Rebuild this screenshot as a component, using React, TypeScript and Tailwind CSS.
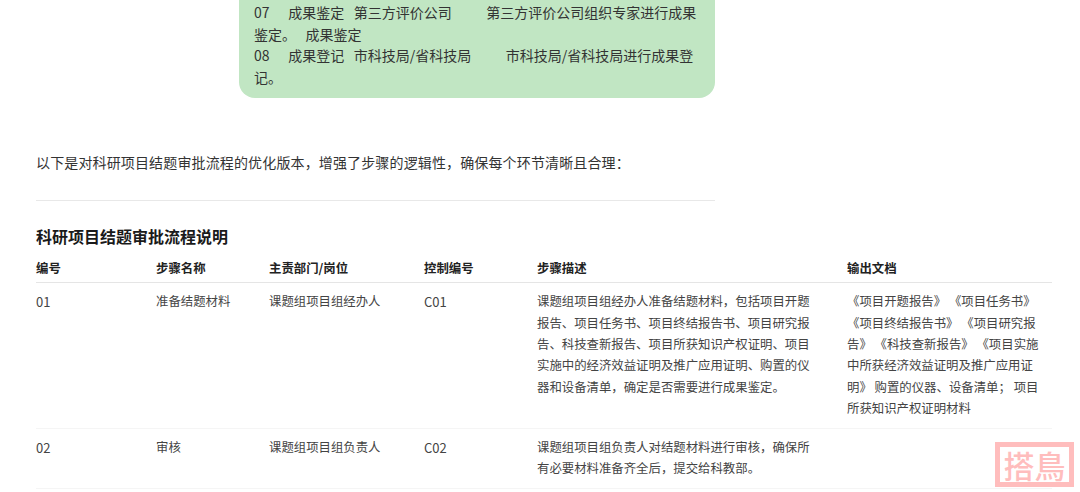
import React from 'react';

const rows = [
  {
    no: '01',
    name: '准备结题材料',
    dept: '课题组项目组经办人',
    code: 'C01',
    desc: '课题组项目组经办人准备结题材料，包括项目开题报告、项目任务书、项目终结报告书、项目研究报告、科技查新报告、项目所获知识产权证明、项目实施中的经济效益证明及推广应用证明、购置的仪器和设备清单，确定是否需要进行成果鉴定。',
    docs: ' 《项目开题报告》 《项目任务书》 《项目终结报告书》 《项目研究报告》 《科技查新报告》 《项目实施中所获经济效益证明及推广应用证明》 购置的仪器、设备清单； 项目所获知识产权证明材料',
  },
  {
    no: '02',
    name: '审核',
    dept: '课题组项目组负责人',
    code: 'C02',
    desc: '课题组项目组负责人对结题材料进行审核，确保所有必要材料准备齐全后，提交给科教部。',
    docs: '',
  },
];

const App: React.FC = () => {
  return (
    <div className="relative h-[492px] w-[1080px] overflow-hidden bg-white text-[#333] font-['Noto_Sans_CJK_SC','Noto_Sans',sans-serif]">
      {/* green note, top is cut off by the scroll */}
      <div className="ml-[239px] w-[476px] rounded-b-2xl bg-[#c1e6c3] px-[15px] pt-[2px] pb-[9px] text-[14px] leading-[21.7px] whitespace-pre-wrap">
        <div>{'07      成果鉴定   第三方评价公司           第三方评价公司组织专家进行成果鉴定。   成果鉴定'}</div>
        <div>{'08      成果登记   市科技局/省科技局           市科技局/省科技局进行成果登记。'}</div>
      </div>

      <div className="ml-[36px] w-[1016px]">
        <p className="mt-[54px] text-[14px] leading-[21px] tracking-[0.14px]">
          以下是对科研项目结题审批流程的优化版本，增强了步骤的逻辑性，确保每个环节清晰且合理：
        </p>
        <hr className="mt-[27px] w-[679px] border-t border-[#e8e8e8]" />
        <h3 className="mt-[23px] text-[16px] leading-[24px] font-bold text-[#1a1a1a]">科研项目结题审批流程说明</h3>
        <table className="mt-[10px] w-full table-fixed border-collapse text-[12.4px] leading-[21.4px]">
          <thead>
            <tr className="border-b border-[#e5e5e5] text-left text-[#222]">
              <th className="w-[120px] pb-[3px] font-semibold">编号</th>
              <th className="w-[113px] pb-[3px] font-semibold">步骤名称</th>
              <th className="w-[155px] pb-[3px] font-semibold">主责部门/岗位</th>
              <th className="w-[113px] pb-[3px] font-semibold">控制编号</th>
              <th className="w-[310px] pb-[3px] font-semibold">步骤描述</th>
              <th className="pb-[3px] font-semibold">输出文档</th>
            </tr>
          </thead>
          <tbody>
            {rows.map((r) => (
              <tr key={r.no} className="border-b border-[#f5f5f5] align-top text-[#444] last:[&>td]:pb-[9px]">
                <td className="pt-[8px] pb-[8px] text-[13px]">{r.no}</td>
                <td className="pt-[8px] pb-[8px]">{r.name}</td>
                <td className="pt-[8px] pb-[8px]">{r.dept}</td>
                <td className="pt-[8px] pb-[8px] text-[13px]">{r.code}</td>
                <td className="pt-[8px] pb-[8px] pr-[36px]">{r.desc}</td>
                <td className="pt-[8px] pb-[8px] pr-[8px]">{r.docs}</td>
              </tr>
            ))}
          </tbody>
        </table>
      </div>

      {/* watermark stamp */}
      <div className="absolute left-[995px] top-[442px] flex h-[45px] w-[79px] items-center justify-center border-[5px] border-[#ffbdbd] bg-white text-[31px] leading-none font-medium text-[#ffbdbd]">
        搭鳥
      </div>
    </div>
  );
};

export default App;
